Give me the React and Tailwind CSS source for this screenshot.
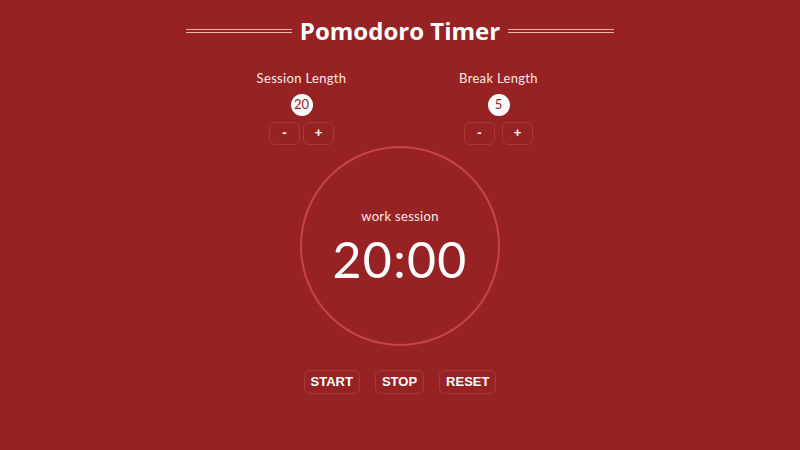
import { useState } from "react";

const Rule = () => (
  <div className="flex w-[106px] flex-col gap-[2px]">
    <div className="h-px bg-[#f0b4b0]" />
    <div className="h-px bg-[#f0b4b0]" />
  </div>
);

const LengthControl = ({ label, value, onDec, onInc, gap }) => (
  <div className="flex w-[110px] flex-col items-center">
    <p className="mt-px text-[13px] tracking-wide text-[#fbe9e7]">{label}</p>
    <div className="mt-[5px] flex h-[22px] w-[22px] items-center justify-center rounded-full bg-white text-[13px] text-[#962224]">
      {value}
    </div>
    <div className={`mt-[6px] flex ${gap}`}>
      <button
        onClick={onDec}
        className="flex h-[23px] w-[31px] items-center justify-center rounded-md border border-[#a93838] font-['Liberation_Sans',sans-serif] text-[13px] font-bold text-white"
      >
        -
      </button>
      <button
        onClick={onInc}
        className="flex h-[23px] w-[31px] items-center justify-center rounded-md border border-[#a93838] font-['Liberation_Sans',sans-serif] text-[13px] font-bold text-white"
      >
        +
      </button>
    </div>
  </div>
);

export default function App() {
  const [session, setSession] = useState(20);
  const [brk, setBrk] = useState(5);

  return (
    <div className="flex h-[450px] w-[800px] flex-col items-center bg-[#962224] font-['Lato','Open_Sans',sans-serif] text-white">
      <div className="mt-[15px] flex items-center gap-[8px]">
        <Rule />
        <h1 className="font-['Open_Sans',sans-serif] text-[24px] font-bold leading-[32px]">
          Pomodoro Timer
        </h1>
        <Rule />
      </div>

      <div className="mt-[21px] flex gap-[87px]">
        <LengthControl
          label="Session Length"
          value={session}
          gap="gap-[3px]"
          onDec={() => setSession((s) => Math.max(1, s - 1))}
          onInc={() => setSession((s) => s + 1)}
        />
        <LengthControl
          label="Break Length"
          value={brk}
          gap="gap-[7px]"
          onDec={() => setBrk((b) => Math.max(1, b - 1))}
          onInc={() => setBrk((b) => b + 1)}
        />
      </div>

      <div className="mt-px flex h-[200px] w-[200px] flex-col items-center justify-center rounded-full border-2 border-[#c4444a] pt-[12px]">
        <p className="mt-[-8px] text-[13px] tracking-wide text-[#fbe9e7]">work session</p>
        <p className="mt-[4px] text-[50px] leading-[58px] tracking-wide">
          {session}:00
        </p>
      </div>

      <div className="mt-[24px] flex gap-[15px] font-['Liberation_Sans',sans-serif] text-[13px] font-bold">
        <button className="h-[24px] rounded-md border border-[#a93838] px-[6px]">START</button>
        <button className="h-[24px] rounded-md border border-[#a93838] px-[6px]">STOP</button>
        <button className="h-[24px] rounded-md border border-[#a93838] px-[6px]">RESET</button>
      </div>
    </div>
  );
}
